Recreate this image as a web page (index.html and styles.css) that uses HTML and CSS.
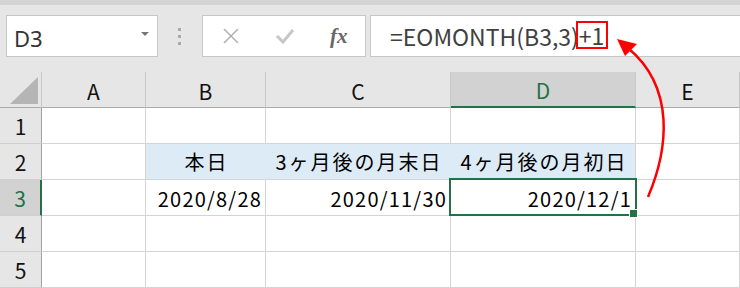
FILE: index.html
```html
<!DOCTYPE html>
<html lang="ja">
<head>
    <meta charset="UTF-8">
    <title>EOMONTH</title>
    <link rel="stylesheet" href="styles.css">
</head>
<body>
    <div class="toolbar">
        <div class="name-box">
            <span class="cell-ref">D3</span>
            <span class="caret"></span>
        </div>
        <div class="grip"><i></i><i></i><i></i></div>
        <div class="fx-tools">
            <svg class="tool-icon" viewBox="0 0 20 20">
                <path d="M3 3 L17 17 M17 3 L3 17" stroke="#b3b3b3" stroke-width="1.6" fill="none"/>
            </svg>
            <svg class="tool-icon" viewBox="0 0 20 20">
                <path d="M2 10 L8 16 L18 4" stroke="#c6c6c6" stroke-width="3" fill="none"/>
            </svg>
            <span class="fx">fx</span>
        </div>
        <div class="formula">=EOMONTH(B3,3)<span class="mark">+1</span></div>
    </div>

    <div class="sheet">
        <div class="corner"><span class="tri"></span></div>
        <div class="hd">A</div>
        <div class="hd">B</div>
        <div class="hd">C</div>
        <div class="hd active">D</div>
        <div class="hd">E</div>

        <div class="rh">1</div>
        <div class="c"></div><div class="c"></div><div class="c"></div><div class="c"></div><div class="c"></div>

        <div class="rh">2</div>
        <div class="c"></div>
        <div class="c fill">本日</div>
        <div class="c fill">3ヶ月後の月末日</div>
        <div class="c fill last">4ヶ月後の月初日</div>
        <div class="c"></div>

        <div class="rh active">3</div>
        <div class="c"></div>
        <div class="c num">2020/8/28</div>
        <div class="c num">2020/11/30</div>
        <div class="c num selected">2020/12/1</div>
        <div class="c"></div>

        <div class="rh">4</div>
        <div class="c"></div><div class="c"></div><div class="c"></div><div class="c"></div><div class="c"></div>

        <div class="rh">5</div>
        <div class="c"></div><div class="c"></div><div class="c"></div><div class="c"></div><div class="c"></div>
    </div>

    <!-- annotation arrow: from D3 up to the "+1" in the formula bar -->
    <svg class="arrow" width="740" height="288" viewBox="0 0 740 288">
        <path d="M648 197 C668 150 676 88 628 48" stroke="#ff0000" stroke-width="2.5" fill="none"/>
        <polygon points="617,39 637,44 625,56" fill="#ff0000"/>
    </svg>
</body>
</html>
```

FILE: styles.css
```css
* {
    margin: 0;
    padding: 0;
    box-sizing: border-box;
}

body {
    width: 740px;
    height: 288px;
    overflow: hidden;
    position: relative;
    background: #ffffff;
    font-family: "Noto Sans CJK JP", "Noto Sans", sans-serif;
    color: #000;
}

/* top formula bar area */
.toolbar {
    height: 72px;
    background: #e6e6e6;
    border-top: 5px solid #d4d4d4;
    display: flex;
    align-items: flex-start;
    padding: 10px 0 0 6px;
}

.name-box {
    width: 152px;
    height: 42px;
    background: #fff;
    border: 1px solid #c6c6c6;
    display: flex;
    align-items: center;
    justify-content: space-between;
    padding: 0 8px 0 7px;
}

.cell-ref {
    font-family: "Noto Sans", sans-serif;
    font-size: 22px;
    color: #333;
    line-height: 1;
    padding-top: 3px;
}

.caret {
    width: 0;
    height: 0;
    border-left: 4px solid transparent;
    border-right: 4px solid transparent;
    border-top: 4px solid #777;
    margin-top: -4px;
}

.grip {
    margin-left: 20px;
    display: flex;
    flex-direction: column;
    gap: 4px;
    padding-top: 13px;
}

.grip i {
    display: block;
    width: 3px;
    height: 3px;
    background: #a9a9a9;
}

.fx-tools {
    margin-left: 21px;
    width: 164px;
    height: 42px;
    background: #fff;
    border: 1px solid #c6c6c6;
    display: flex;
    align-items: center;
    padding-left: 18px;
    gap: 34px;
}

.tool-icon {
    width: 20px;
    height: 20px;
}

.fx {
    font-family: "Liberation Serif", serif;
    font-style: italic;
    font-weight: bold;
    font-size: 21px;
    color: #666;
    margin-left: 1px;
}

.formula {
    margin-left: 4px;
    flex: 1;
    height: 42px;
    margin-right: -2px;
    background: #fff;
    border: 1px solid #c6c6c6;
    display: flex;
    align-items: center;
    padding-left: 19px;
    font-size: 23px;
    color: #404040;
}

.mark {
    display: inline-block;
    border: 2px solid #ff0000;
    padding: 0 2px 0 1px;
    line-height: 24px;
    margin-left: -3px;
    margin-top: -2px;
}

/* grid */
.sheet {
    display: grid;
    grid-template-columns: 42px 104px 120px 185px 185px 1fr;
    grid-auto-rows: 36px;
}

.corner,
.hd,
.rh {
    background: #e6e6e6;
    display: flex;
    align-items: center;
    justify-content: center;
    font-size: 21px;
    color: #111;
}

.corner {
    border-right: 1px solid #c8c8c8;
    border-bottom: 1px solid #ababab;
    position: relative;
}

.tri {
    position: absolute;
    right: 3px;
    bottom: 3px;
    width: 0;
    height: 0;
    border-left: 28px solid transparent;
    border-bottom: 27px solid #b5b5b5;
}

.hd {
    border-right: 1px solid #c8c8c8;
    border-bottom: 1px solid #ababab;
    padding-top: 2px;
}

.rh {
    border-right: 1px solid #a3a3a3;
    border-bottom: 1px solid #d0d0d0;
}

.hd.active {
    background: #d2d2d2;
    color: #217346;
    border-bottom: 2px solid #217346;
}

.rh.active {
    background: #d2d2d2;
    color: #217346;
    border-right: 2px solid #217346;
}

.c {
    border-right: 1px solid #d4d4d4;
    border-bottom: 1px solid #d4d4d4;
    display: flex;
    align-items: center;
    font-size: 20px;
    white-space: nowrap;
}

.fill {
    background: #ddebf7;
    border-right-color: #ddebf7;
    justify-content: center;
    letter-spacing: 2px;
    padding-left: 2px;
}

.fill.last {
    border-right-color: #d4d4d4;
}

.num {
    justify-content: flex-end;
    padding-right: 3px;
    letter-spacing: 1.2px;
    padding-top: 1px;
}

.selected {
    position: relative;
}

.selected::after {
    content: "";
    position: absolute;
    left: -2px;
    top: -2px;
    right: -2px;
    bottom: -1px;
    border: 2px solid #217346;
}

.selected::before {
    content: "";
    position: absolute;
    right: -3px;
    bottom: -3px;
    width: 7px;
    height: 7px;
    background: #217346;
    border: 1px solid #fff;
    z-index: 1;
}

.arrow {
    position: absolute;
    left: 0;
    top: 0;
    pointer-events: none;
}
```
